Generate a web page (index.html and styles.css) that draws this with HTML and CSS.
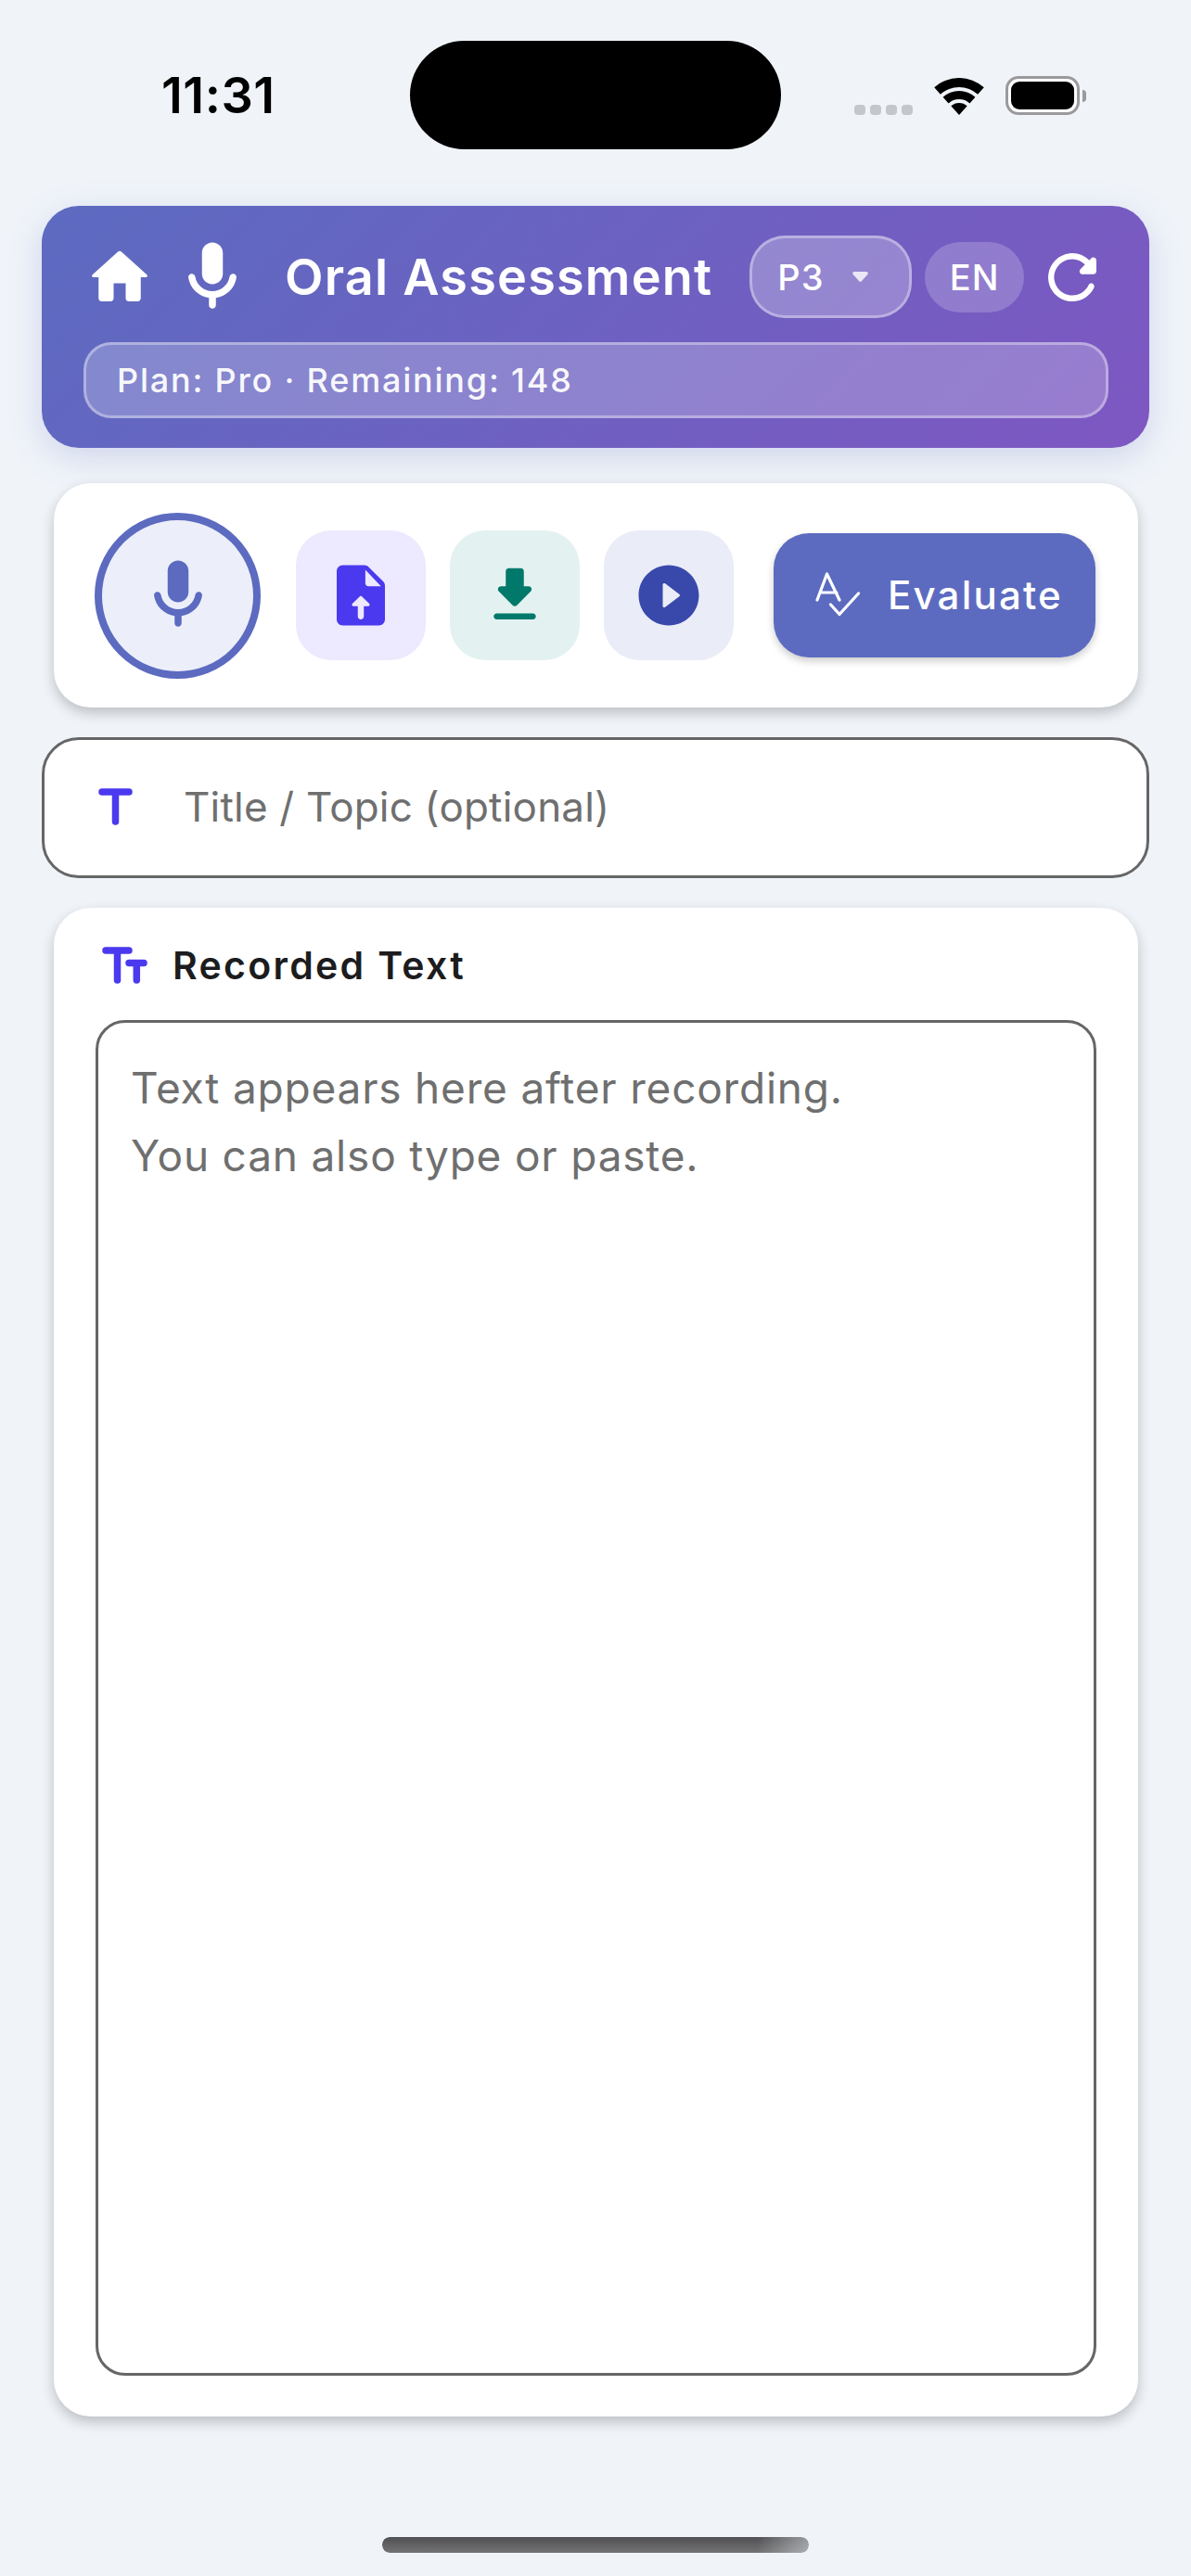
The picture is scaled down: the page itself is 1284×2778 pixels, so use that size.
FILE: index.html
```html
<!DOCTYPE html>
<html lang="en">
<head>
    <meta charset="UTF-8">
    <meta name="viewport" content="width=device-width, initial-scale=1.0">
    <title>Oral Assessment</title>
    <link rel="stylesheet" href="styles.css">
</head>
<body>

    <div class="status-bar">
        <span class="status-time">11:31</span>
        <div class="notch"></div>
        <div class="status-icons">
            <div class="signal"><i></i><i></i><i></i><i></i></div>
            <svg class="wifi" viewBox="0 0 54 40">
                <path d="M.2 10.3A40 40 0 0 1 53.8 10.3L47.1 17.7A30 30 0 0 0 6.9 17.7Z"/>
                <path d="M9.6 20.7A26 26 0 0 1 44.4 20.7L38.4 27.4A17 17 0 0 0 15.6 27.4Z"/>
                <path d="M18.3 30.3A13 13 0 0 1 35.7 30.3L27 40Z"/>
            </svg>
            <div class="battery"><div class="battery-level"></div></div>
            <div class="battery-nub"></div>
        </div>
    </div>

    <header class="app-header">
        <div class="header-row">
            <svg class="icon-home" viewBox="0 0 24 24"><path d="M10 19v-5h4v5c0 .55.45 1 1 1h3c.55 0 1-.45 1-1v-7h1.7c.46 0 .68-.57.33-.87L12.67 3.6c-.38-.34-.96-.34-1.34 0l-8.36 7.53c-.34.3-.13.87.33.87H5v7c0 .55.45 1 1 1h3c.55 0 1-.45 1-1z"/></svg>
            <svg class="icon-mic" viewBox="0 0 24 24"><path d="M12 14c1.66 0 3-1.34 3-3V5c0-1.66-1.34-3-3-3S9 3.34 9 5v6c0 1.66 1.34 3 3 3zm5.91-3c-.49 0-.9.36-.98.85C16.52 14.2 14.47 16 12 16s-4.52-1.8-4.93-4.15c-.08-.49-.49-.85-.98-.85-.61 0-1.09.54-1 1.14.49 3 2.89 5.35 5.91 5.78V20c0 .55.45 1 1 1s1-.45 1-1v-2.08c3.02-.43 5.42-2.78 5.91-5.78.1-.6-.39-1.14-1-1.14z"/></svg>
            <h1 class="app-title">Oral Assessment</h1>
            <div class="grade-pill">
                <span>P3</span>
                <svg class="caret" viewBox="0 0 17 11"><path d="M2 0h13c1.6 0 2.4 1.800 1.300 3L9.800 10.200c-.7.7-1.900.7-2.600 0L.7 3C-.4 1.800.4 0 2 0z"/></svg>
            </div>
            <div class="lang-pill">EN</div>
            <svg class="icon-refresh" viewBox="0 0 24 24"><path d="M17.65 6.35c-1.63-1.63-3.94-2.57-6.48-2.31-3.67.37-6.69 3.35-7.1 7.02C3.52 15.91 7.27 20 12 20c3.19 0 5.93-1.87 7.21-4.56.32-.67-.16-1.44-.9-1.44-.37 0-.72.2-.88.53-1.13 2.43-3.84 3.97-6.8 3.31-2.22-.49-4.01-2.3-4.48-4.52C5.31 9.44 8.26 6 12 6c1.66 0 3.14.69 4.22 1.78l-1.51 1.51c-.63.63-.19 1.71.7 1.71H19c.55 0 1-.45 1-1V6.41c0-.89-1.08-1.34-1.71-.71l-.64.65z"/></svg>
        </div>
        <div class="plan-bar">Plan: Pro · Remaining: 148</div>
    </header>

    <section class="toolbar">
        <button class="record-btn">
            <svg viewBox="0 0 24 24"><path d="M12 14c1.66 0 3-1.34 3-3V5c0-1.66-1.34-3-3-3S9 3.34 9 5v6c0 1.66 1.34 3 3 3zm5.91-3c-.49 0-.9.36-.98.85C16.52 14.2 14.47 16 12 16s-4.52-1.8-4.93-4.15c-.08-.49-.49-.85-.98-.85-.61 0-1.09.54-1 1.14.49 3 2.89 5.35 5.91 5.78V20c0 .55.45 1 1 1s1-.45 1-1v-2.08c3.02-.43 5.42-2.78 5.91-5.78.1-.6-.39-1.14-1-1.14z"/></svg>
        </button>
        <button class="tool-btn tool-upload">
            <svg viewBox="0 0 24 24"><path fill-rule="evenodd" d="M14.59 2.59c-.38-.38-.89-.59-1.42-.59H6c-1.1 0-2 .9-2 2v16c0 1.1.89 2 1.99 2H18c1.1 0 2-.9 2-2V8.83c0-.53-.21-1.04-.59-1.42l-4.82-4.82zM13.500 8V3.500L18.700 9H14.500c-.55 0-1-.45-1-1zM11.650 12.350L9.200 14.800c-.3.3-.1.85.35.85H11V19c0 .55.45 1 1 1s1-.45 1-1v-3.350h1.450c.45 0 .65-.55.35-.85l-2.450-2.450c-.2-.2-.5-.2-.7 0z"/></svg>
        </button>
        <button class="tool-btn tool-download">
            <svg viewBox="0 0 24 24"><path d="M16.59 9H15V4c0-.55-.45-1-1-1h-4c-.55 0-1 .45-1 1v5H7.41c-.89 0-1.34 1.08-.71 1.71l4.59 4.59c.39.39 1.02.39 1.41 0l4.59-4.59c.63-.63.19-1.71-.7-1.71zM5 19c0 .55.45 1 1 1h12c.55 0 1-.45 1-1s-.45-1-1-1H6c-.55 0-1 .45-1 1z"/></svg>
        </button>
        <button class="tool-btn tool-play">
            <svg viewBox="0 0 24 24"><path d="M12 2C6.48 2 2 6.48 2 12s4.48 10 10 10 10-4.48 10-10S17.52 2 12 2zm-2 13.5v-7c0-.41.47-.65.8-.4l4.67 3.5c.27.2.27.6 0 .8l-4.67 3.5c-.33.25-.8.01-.8-.4z"/></svg>
        </button>
        <button class="evaluate-btn">
            <svg viewBox="0 0 50 48"><path d="M2 30L12.500 2L26 30M5.500 22H23M16.500 35L26 45.500L46.500 23"/></svg>
            <span>Evaluate</span>
        </button>
    </section>

    <div class="title-field">
        <svg viewBox="0 0 37 40"><path d="M4 4H33M18.500 4V36"/></svg>
        <span>Title / Topic (optional)</span>
    </div>

    <section class="text-card">
        <div class="text-card-label">
            <svg viewBox="0 0 49 40"><path d="M4 4H29M16.500 4V36M29 17.500H45M37.300 17.500V36"/></svg>
            <span>Recorded Text</span>
        </div>
        <div class="text-area">
            <p>Text appears here after recording.</p>
            <p>You can also type or paste.</p>
        </div>
    </section>

    <div class="home-bar"></div>

</body>
</html>
```

FILE: styles.css
```css
* {
    box-sizing: border-box;
}

body {
    margin: 0;
    width: 1284px;
    height: 2778px;
    overflow: hidden;
    background-color: #f0f4f9;
    font-family: 'Inter', 'Liberation Sans', sans-serif;
    display: flex;
    flex-direction: column;
}

button {
    border: none;
    padding: 0;
    font-family: inherit;
    display: flex;
    align-items: center;
    justify-content: center;
}

/* --- Status bar --- */
.status-bar {
    height: 222px;
    padding: 44px 0 61px 174px;
    display: flex;
    align-items: center;
}

.status-time {
    width: 268px;
    font-size: 54px;
    font-weight: 600;
    letter-spacing: 0.5px;
    color: #000;
}

.notch {
    width: 400px;
    height: 117px;
    border-radius: 59px;
    background-color: #000;
}

.status-icons {
    margin-left: 79px;
    height: 42px;
    display: flex;
    align-items: flex-end;
}

.signal {
    display: flex;
    gap: 5px;
    margin-right: 23px;
}

.signal i {
    display: block;
    width: 12px;
    height: 11px;
    border-radius: 4px;
    background-color: #c4c6ca;
}

.wifi {
    width: 54px;
    height: 40px;
    margin-right: 23px;
    fill: #000;
}

.battery {
    width: 80px;
    height: 42px;
    padding: 3px;
    border: 3px solid #9a9a9e;
    border-radius: 14px;
    background-color: #fff;
}

.battery-level {
    height: 100%;
    border-radius: 9px;
    background-color: #000;
}

.battery-nub {
    width: 4px;
    height: 13px;
    margin: 0 0 14px 3px;
    border-radius: 0 4px 4px 0;
    background-color: #9a9a9e;
}

/* --- Header --- */
.app-header {
    margin: 0 45px;
    height: 261px;
    padding: 32px 44px 32px 45px;
    border-radius: 40px;
    background: linear-gradient(135deg, #5c6bc0, #7e57c2);
    box-shadow: 0 10px 36px rgba(92, 107, 192, 0.22);
    display: flex;
    flex-direction: column;
    gap: 26px;
    color: #fff;
}

.header-row {
    height: 89px;
    display: flex;
    align-items: center;
    flex-shrink: 0;
}

.header-row svg {
    fill: #fff;
    flex-shrink: 0;
}

.icon-home {
    width: 78px;
    height: 78px;
}

.icon-mic {
    width: 90px;
    height: 90px;
    margin-left: 16px;
}

.app-title {
    margin: 0 0 0 33px;
    width: 502px;
    font-size: 54px;
    font-weight: 600;
    letter-spacing: 1.2px;
    white-space: nowrap;
}

.grade-pill {
    width: 175px;
    height: 89px;
    padding-left: 27px;
    border: 3px solid rgba(255, 255, 255, 0.35);
    border-radius: 38px;
    background-color: rgba(255, 255, 255, 0.25);
    display: flex;
    align-items: center;
    font-size: 38px;
    font-weight: 500;
    letter-spacing: 1px;
}

.header-row .caret {
    width: 17px;
    height: 11px;
    margin-left: 30px;
    fill: rgba(255, 255, 255, 0.8);
}

.lang-pill {
    width: 107px;
    height: 76px;
    margin-left: 14px;
    border-radius: 38px;
    background-color: rgba(255, 255, 255, 0.2);
    display: flex;
    align-items: center;
    justify-content: center;
    font-size: 38px;
    font-weight: 500;
    letter-spacing: 1px;
}

.icon-refresh {
    width: 78px;
    height: 78px;
    margin-left: 13px;
}

.plan-bar {
    height: 82px;
    padding-left: 33px;
    border: 3px solid rgba(255, 255, 255, 0.35);
    border-radius: 30px;
    background-color: rgba(255, 255, 255, 0.22);
    display: flex;
    align-items: center;
    font-size: 36px;
    font-weight: 500;
    letter-spacing: 1.8px;
    color: rgba(255, 255, 255, 0.96);
}

/* --- Toolbar --- */
.toolbar {
    margin: 38px 57px 0 58px;
    height: 242px;
    padding: 0 45px 0 44px;
    border-radius: 40px;
    background-color: #fff;
    box-shadow: 0 6px 14px rgba(0, 0, 0, 0.22);
    display: flex;
    align-items: center;
}

.record-btn {
    width: 179px;
    height: 179px;
    border: 8px solid #5c6bc0;
    border-radius: 50%;
    background-color: #eceff9;
}

.record-btn svg {
    width: 90px;
    height: 90px;
    fill: #5c6bc0;
}

.tool-btn {
    width: 140px;
    height: 140px;
    margin-left: 26px;
    border-radius: 38px;
}

.tool-btn svg {
    width: 78px;
    height: 78px;
}

.tool-upload {
    margin-left: 38px;
    background-color: #ede9fe;
}

.tool-upload svg {
    fill: #4b39ef;
}

.tool-download {
    background-color: #e3f2f1;
}

.tool-download svg {
    fill: #00796b;
}

.tool-play {
    background-color: #eaecf7;
}

.tool-play svg {
    fill: #3949ab;
}

.evaluate-btn {
    width: 347px;
    height: 134px;
    margin-left: 43px;
    padding: 0 0 2px 45px;
    border-radius: 38px;
    background-color: #5c6bc0;
    box-shadow: 0 4px 8px rgba(0, 0, 0, 0.2);
    justify-content: flex-start;
    gap: 28px;
    color: #fff;
    font-size: 42px;
    font-weight: 500;
    letter-spacing: 2.2px;
}

.evaluate-btn svg {
    width: 50px;
    height: 48px;
    fill: none;
    stroke: #fff;
    stroke-width: 3.2;
    stroke-linecap: round;
    stroke-linejoin: round;
}

/* --- Title input --- */
.title-field {
    margin: 32px 45px 0;
    height: 152px;
    padding: 0 0 2px 58px;
    border: 3px solid #666;
    border-radius: 40px;
    background-color: #fff;
    display: flex;
    align-items: center;
    gap: 55px;
    font-size: 44px;
    letter-spacing: 0.2px;
    color: #6f6f6f;
}

.title-field svg {
    width: 37px;
    height: 40px;
    fill: none;
    stroke: #4b39ef;
    stroke-width: 7.5;
    stroke-linecap: round;
}

/* --- Recorded text card --- */
.text-card {
    margin: 32px 57px 0 58px;
    height: 1627px;
    padding: 42px 45px 44px;
    border-radius: 40px;
    background-color: #fff;
    box-shadow: 0 6px 14px rgba(0, 0, 0, 0.22);
    display: flex;
    flex-direction: column;
}

.text-card-label {
    height: 40px;
    margin: 0 0 39px 7px;
    display: flex;
    align-items: center;
    gap: 27px;
    font-size: 41px;
    font-weight: 600;
    letter-spacing: 2.3px;
    color: #1c1c1e;
}

.text-card-label svg {
    width: 49px;
    height: 40px;
    fill: none;
    stroke: #4b39ef;
    stroke-width: 7.5;
    stroke-linecap: round;
}

.text-area {
    flex: 1;
    padding: 34px 35px;
    border: 3px solid #666;
    border-radius: 32px;
    font-size: 46px;
    line-height: 73px;
    letter-spacing: 0.8px;
    color: #6f6f6f;
}

.text-area p {
    margin: 0;
}

/* --- Home indicator --- */
.home-bar {
    width: 460px;
    height: 17px;
    margin: 130px 0 0 412px;
    border-radius: 8px;
    background: linear-gradient(180deg, #505052, #737375);
    -webkit-mask-image: linear-gradient(90deg, #000 88%, rgba(0, 0, 0, 0.55) 100%);
    mask-image: linear-gradient(90deg, #000 88%, rgba(0, 0, 0, 0.55) 100%);
}
```
